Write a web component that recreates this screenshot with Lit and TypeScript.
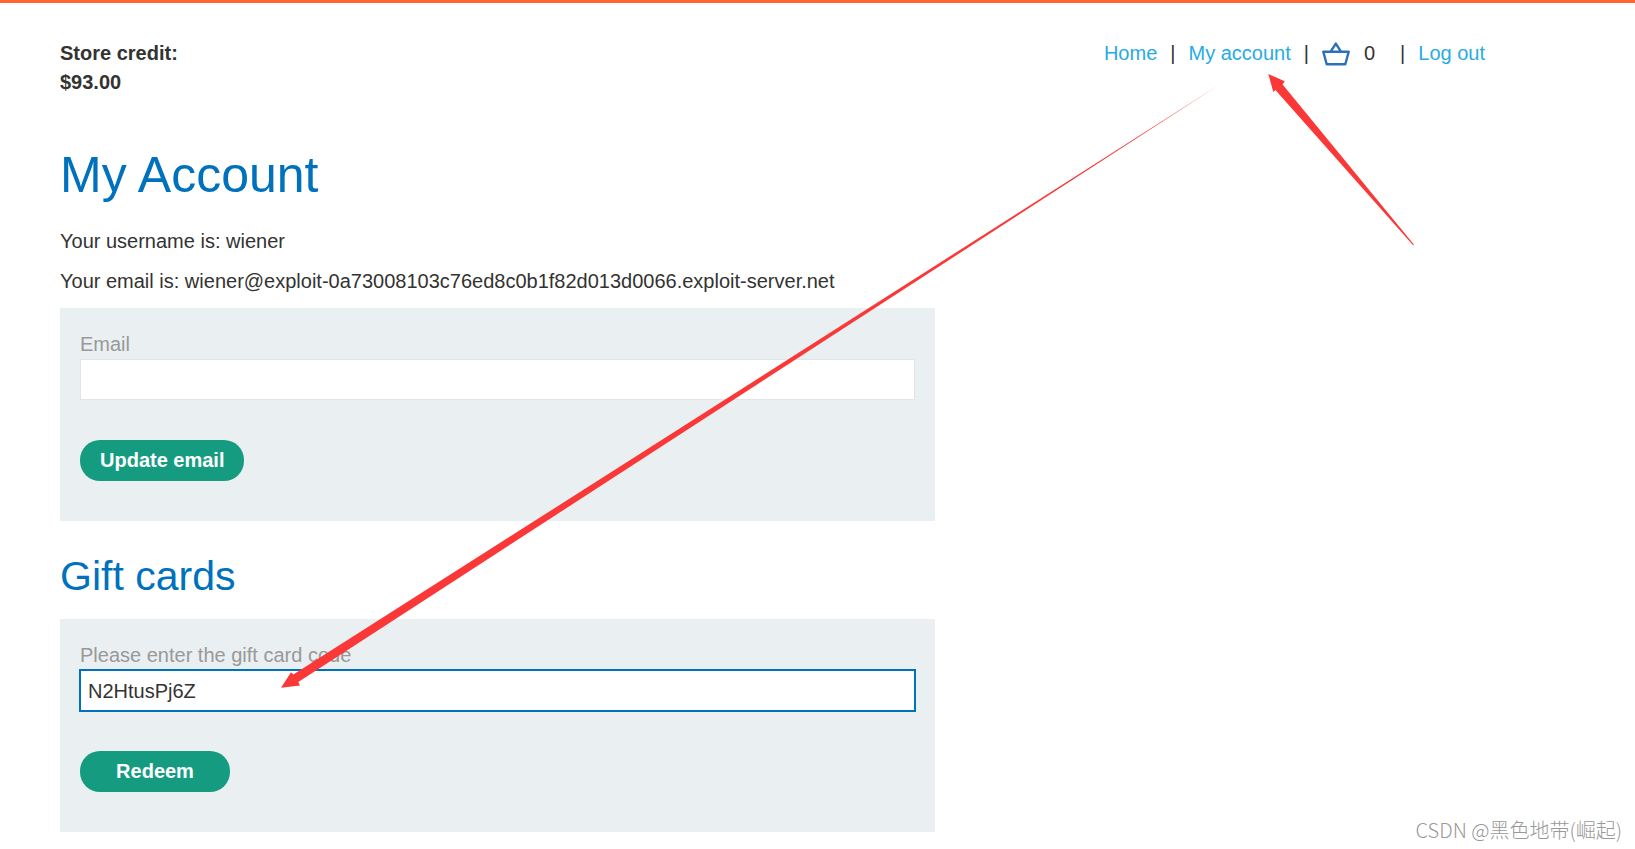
import { LitElement, html, css } from "lit";
import { customElement, state } from "lit/decorators.js";

@customElement("app-root")
export class AppRoot extends LitElement {
  static styles = css`
    :host {
      display: block;
      position: relative;
      min-height: 100vh;
      box-sizing: border-box;
      overflow: hidden;
      border-top: 3px solid #ff6633;
      background: #fff;
      color: #333332;
      font: 20px/29px "Liberation Sans", Arial, sans-serif;
    }
    .page {
      padding: 36px 150px 16px 60px;
    }
    .header {
      display: flex;
      justify-content: space-between;
      align-items: flex-start;
      margin-bottom: 48px;
    }
    .credit {
      font-weight: bold;
      width: 130px;
      margin: 0;
    }
    .nav {
      display: flex;
      align-items: center;
      gap: 13px;
    }
    .link {
      color: #29abe2;
      text-decoration: none;
    }
    .basket {
      display: flex;
      align-items: center;
      gap: 14px;
      padding-right: 12px;
      color: inherit;
      text-decoration: none;
    }
    .basket-icon {
      display: block;
      width: 28px;
      height: 24px;
      fill: none;
      stroke: #2c71b8;
      stroke-width: 2.4;
      stroke-linejoin: round;
    }
    .title,
    .subtitle {
      color: #0071bc;
      font-weight: normal;
    }
    .title {
      font-size: 50px;
      line-height: 60px;
      margin: 0 0 22px;
    }
    .subtitle {
      font-size: 41px;
      line-height: 50px;
      margin: 30px 0 18px;
    }
    .details {
      margin: 0 0 11px;
      overflow-wrap: anywhere;
    }
    .form {
      box-sizing: border-box;
      max-width: 875px;
      margin-top: 12px;
      padding: 22px 20px 40px;
      background: #eaeff2;
    }
    .label {
      display: block;
      color: #999;
    }
    .field {
      display: block;
      box-sizing: border-box;
      width: 100%;
      height: 41px;
      margin: 0 0 40px;
      padding: 2px 7px 0;
      border: 1px solid #e4e4e4;
      border-radius: 0;
      outline: none;
      background: #fff;
      color: #333332;
      font: inherit;
    }
    .field.active {
      border-color: #0071bc;
      box-shadow: 0 0 0 1px #0071bc;
    }
    .button {
      display: block;
      height: 41px;
      min-width: 150px;
      padding: 0 20px;
      border: 0;
      border-radius: 20px;
      background: #159c80;
      color: #fff;
      font: inherit;
      font-weight: bold;
      cursor: pointer;
    }
    .arrows {
      position: absolute;
      top: -3px;
      left: 0;
      width: 1635px;
      height: 849px;
      fill: #fb3838;
      pointer-events: none;
    }
    .watermark {
      position: absolute;
      right: 13px;
      bottom: 5px;
      color: #999;
      font-family: "Noto Sans CJK SC", sans-serif;
      font-weight: 300;
      text-shadow: -1px -1px 0 #fff;
      pointer-events: none;
    }
  `;

  @state() private giftCode = "N2HtusPj6Z";

  private onCode(e: Event) {
    this.giftCode = (e.target as HTMLInputElement).value;
  }

  private onSubmit(e: Event) {
    e.preventDefault();
  }

  render() {
    return html`
      <div class="page">
        <header class="header">
          <p class="credit">Store credit: $93.00</p>
          <nav class="nav">
            <a class="link" href="#home">Home</a>
            <span>|</span>
            <a class="link" href="#account">My account</a>
            <span>|</span>
            <a class="basket" href="#cart" aria-label="Basket, 0 items">
              <svg class="basket-icon" viewBox="0 0 28 24">
                <path d="M1.3 9.7H26.7L23.3 22.3H4.7Z M8.6 9.7L13.8 1.6L19 9.7" />
              </svg>
              <span>0</span>
            </a>
            <span>|</span>
            <a class="link" href="#logout">Log out</a>
          </nav>
        </header>
        <main>
          <h1 class="title">My Account</h1>
          <p class="details">Your username is: wiener</p>
          <p class="details">Your email is: wiener@exploit-0a73008103c76ed8c0b1f82d013d0066.exploit-server.net</p>
          <form class="form" @submit=${this.onSubmit}>
            <label class="label" for="email">Email</label>
            <input class="field" id="email" type="email" />
            <button class="button" type="submit">Update email</button>
          </form>
          <h2 class="subtitle">Gift cards</h2>
          <form class="form" @submit=${this.onSubmit}>
            <label class="label" for="gift">Please enter the gift card code</label>
            <input class="field active" id="gift" type="text" .value=${this.giftCode} @input=${this.onCode} />
            <button class="button" type="submit">Redeem</button>
          </form>
        </main>
      </div>
      <svg class="arrows" viewBox="0 0 1635 849" aria-hidden="true">
        <polygon points="1268.3,74 1284.8,81.3 1282.6,84.4 1413.9,244.6 1413.1,245.2 1275.4,90 1273.3,92" />
        <polygon points="281,687.8 291,672.3 293.3,674.6 1220,84.3 298.3,682 300,685.5" />
      </svg>
      <div class="watermark">CSDN @黑色地带(崛起)</div>
    `;
  }
}
